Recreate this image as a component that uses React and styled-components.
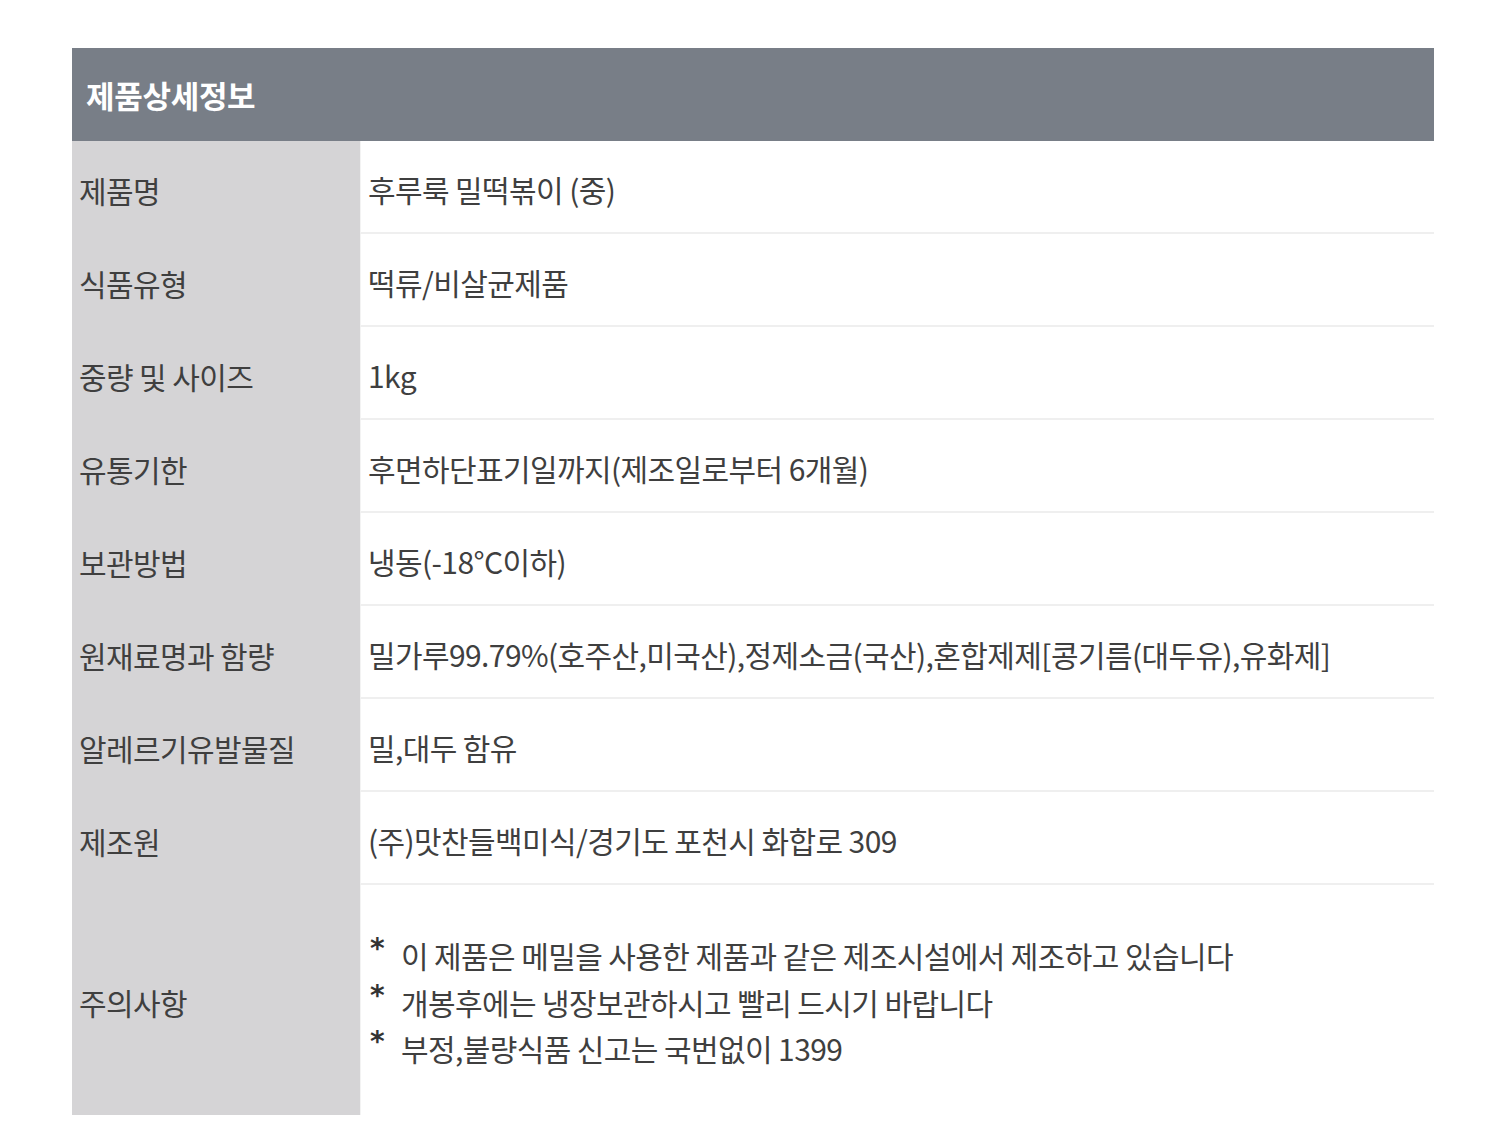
import React from "react";
import styled, { createGlobalStyle } from "styled-components";

const GlobalStyle = createGlobalStyle`
  html, body {
    margin: 0;
    padding: 0;
    background: #ffffff;
  }
  body {
    font-family: "Noto Sans CJK KR", "Noto Sans", sans-serif;
    color: #3d3d3d;
  }
`;

const Page = styled.div`
  padding: 48px 56px 40px 72px;
`;

const InfoTable = styled.section`
  width: 1362px;
  display: flex;
  flex-direction: column;
`;

const TableHeader = styled.div`
  height: 93px;
  background: #787e87;
  display: flex;
  align-items: center;
  padding-left: 14px;
  color: #ffffff;
  font-size: 31px;
  font-weight: 700;
  letter-spacing: -0.3px;
`;

const Row = styled.div`
  display: grid;
  grid-template-columns: 288px 1fr;
  min-height: ${(p) => p.$height || 93}px;
`;

const Label = styled.div`
  background: #d5d4d6;
  display: flex;
  align-items: center;
  padding: 4px 0 0 7px;
  font-size: 30px;
  letter-spacing: -0.6px;
  color: #3f3f3f;
`;

const Value = styled.div`
  display: flex;
  align-items: center;
  padding: 4px 0 0 7px;
  font-size: 30px;
  letter-spacing: -0.6px;
  color: #3f3f3f;
  border-left: 1px solid #f3f3f3;
  border-bottom: ${(p) => (p.$last ? "none" : "2px solid #efefef")};
`;

const NoteList = styled.ul`
  list-style: none;
  margin: 0;
  padding: 0;
  display: flex;
  flex-direction: column;
`;

const Note = styled.li`
  display: flex;
  align-items: flex-start;
  line-height: 46.5px;
`;

const Star = styled.span`
  width: 31px;
  flex-shrink: 0;
  font-family: "DejaVu Sans", sans-serif;
  font-weight: 700;
  font-size: 28px;
  line-height: 34px;
  padding-left: 2px;
  color: #333;
`;

const rows = [
  ["제품명", "후루룩 밀떡볶이 (중)"],
  ["식품유형", "떡류/비살균제품"],
  ["중량 및 사이즈", "1kg"],
  ["유통기한", "후면하단표기일까지(제조일로부터 6개월)"],
  ["보관방법", "냉동(-18°C이하)"],
  ["원재료명과 함량", "밀가루99.79%(호주산,미국산),정제소금(국산),혼합제제[콩기름(대두유),유화제]"],
  ["알레르기유발물질", "밀,대두 함유"],
  ["제조원", "(주)맛찬들백미식/경기도 포천시 화합로 309"],
];

const notes = [
  "이 제품은 메밀을 사용한 제품과 같은 제조시설에서 제조하고 있습니다",
  "개봉후에는 냉장보관하시고 빨리 드시기 바랍니다",
  "부정,불량식품 신고는 국번없이 1399",
];

export default function App() {
  return (
    <>
      <GlobalStyle />
      <Page>
        <InfoTable>
          <TableHeader>제품상세정보</TableHeader>
          {rows.map(([label, value]) => (
            <Row key={label}>
              <Label>{label}</Label>
              <Value>{value}</Value>
            </Row>
          ))}
          <Row $height={230}>
            <Label>주의사항</Label>
            <Value $last>
              <NoteList>
                {notes.map((n) => (
                  <Note key={n}>
                    <Star>*</Star>
                    <span>{n}</span>
                  </Note>
                ))}
              </NoteList>
            </Value>
          </Row>
        </InfoTable>
      </Page>
    </>
  );
}
